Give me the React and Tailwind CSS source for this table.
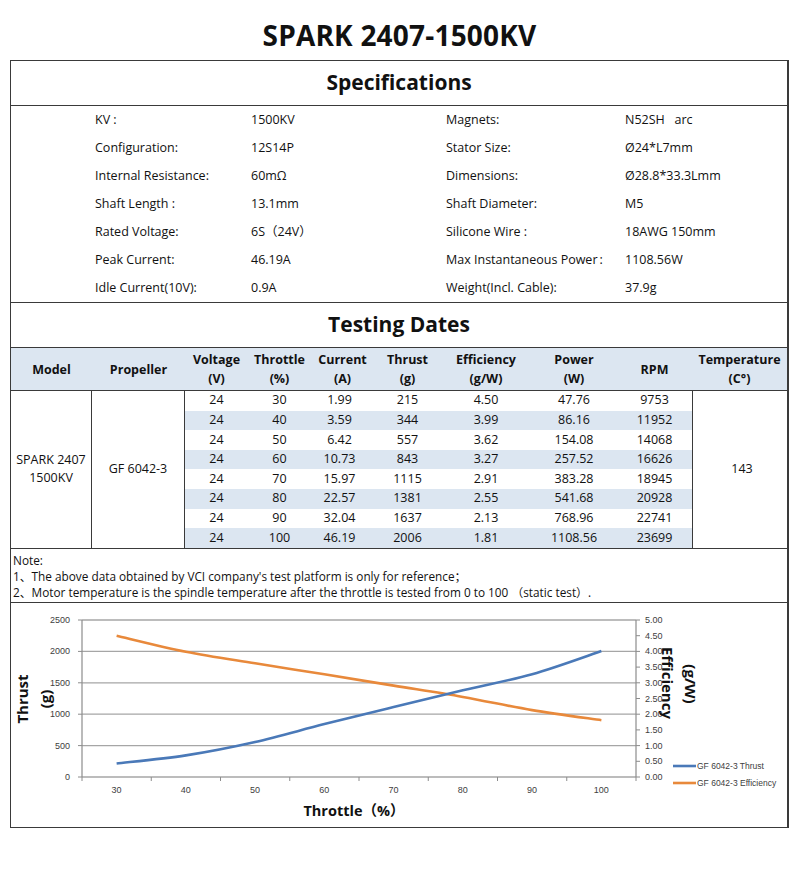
const FONT = { fontFamily: '"Open Sans", "Noto Sans CJK SC", sans-serif' }

const SPECS = [
  ['KV :', '1500KV', 'Magnets:', 'N52SH\u00a0\u00a0\u00a0arc'],
  ['Configuration:', '12S14P', 'Stator Size:', 'Ø24*L7mm'],
  ['Internal Resistance:', '60mΩ', 'Dimensions:', 'Ø28.8*33.3Lmm'],
  ['Shaft Length :', '13.1mm', 'Shaft Diameter:', 'M5'],
  ['Rated Voltage:', '6S（24V）', 'Silicone Wire :', '18AWG 150mm'],
  ['Peak Current:', '46.19A', 'Max Instantaneous Power\u2009:', '1108.56W'],
  ['Idle Current(10V):', '0.9A', 'Weight(Incl. Cable):', '37.9g'],
]

// voltage, throttle, current, thrust, efficiency, power, rpm
const ROWS = [
  ['24', '30', '1.99', '215', '4.50', '47.76', '9753'],
  ['24', '40', '3.59', '344', '3.99', '86.16', '11952'],
  ['24', '50', '6.42', '557', '3.62', '154.08', '14068'],
  ['24', '60', '10.73', '843', '3.27', '257.52', '16626'],
  ['24', '70', '15.97', '1115', '2.91', '383.28', '18945'],
  ['24', '80', '22.57', '1381', '2.55', '541.68', '20928'],
  ['24', '90', '32.04', '1637', '2.13', '768.96', '22741'],
  ['24', '100', '46.19', '2006', '1.81', '1108.56', '23699'],
]

const MID_COLS = 'grid grid-cols-[63px_63px_63px_67px_90px_86px_75px]'

/** smoothed line through points (catmull-rom -> bezier) */
function smoothPath(pts) {
  let d = `M${pts[0][0]},${pts[0][1]}`
  for (let i = 0; i < pts.length - 1; i++) {
    const p0 = pts[i - 1] || pts[i]
    const p1 = pts[i]
    const p2 = pts[i + 1]
    const p3 = pts[i + 2] || p2
    const c1x = p1[0] + (p2[0] - p0[0]) / 6
    const c1y = p1[1] + (p2[1] - p0[1]) / 6
    const c2x = p2[0] - (p3[0] - p1[0]) / 6
    const c2y = p2[1] - (p3[1] - p1[1]) / 6
    d += ` C${c1x},${c1y} ${c2x},${c2y} ${p2[0]},${p2[1]}`
  }
  return d
}

function Chart() {
  const left = 82
  const right = 636
  const top = 619
  const bottom = 776
  const step = (right - left) / 8
  const xs = ROWS.map((_, i) => left + step * (i + 0.5))
  const thrust = ROWS.map((r, i) => [xs[i], bottom - (Number(r[3]) / 2500) * (bottom - top)])
  const eff = ROWS.map((r, i) => [xs[i], bottom - (Number(r[4]) / 5) * (bottom - top)])
  const grid = [0, 500, 1000, 1500, 2000, 2500]
  const rightTicks = [0, 0.5, 1, 1.5, 2, 2.5, 3, 3.5, 4, 4.5, 5]

  return (
    <svg viewBox="11 602 776 224" width="776" height="224" className="block">
      {grid.map((g) => {
        const y = bottom - (g / 2500) * (bottom - top)
        return (
          <g key={g}>
            <line x1={left} x2={right} y1={y} y2={y} stroke="#a6a6a6" strokeWidth="1.3" />
            <line x1={left - 4} x2={left} y1={y} y2={y} stroke="#8c8c8c" />
            <text x={left - 12} y={y + 3} textAnchor="end" fontSize="9" fill="#404040" fontFamily="Liberation Sans, sans-serif">
              {g}
            </text>
          </g>
        )
      })}
      {rightTicks.map((t) => {
        const y = bottom - (t / 5) * (bottom - top)
        return (
          <g key={t}>
            <line x1={right} x2={right + 4} y1={y} y2={y} stroke="#8c8c8c" />
            <text x={right + 9} y={y + 3} fontSize="9" fill="#404040" fontFamily="Liberation Sans, sans-serif">
              {t.toFixed(2)}
            </text>
          </g>
        )
      })}
      <line x1={left} x2={left} y1={top} y2={bottom} stroke="#8c8c8c" strokeWidth="1.2" />
      <line x1={right} x2={right} y1={top} y2={bottom} stroke="#8c8c8c" strokeWidth="1.2" />
      {Array.from({ length: 9 }).map((_, i) => (
        <line key={i} x1={left + step * i} x2={left + step * i} y1={bottom} y2={bottom + 4} stroke="#8c8c8c" />
      ))}
      {ROWS.map((r, i) => (
        <text key={r[1]} x={xs[i]} y={792} textAnchor="middle" fontSize="9" fill="#404040" fontFamily="Liberation Sans, sans-serif">
          {r[1]}
        </text>
      ))}
      <path d={smoothPath(eff)} fill="none" stroke="#e8893b" strokeWidth="2.6" />
      <path d={smoothPath(thrust)} fill="none" stroke="#4a79b8" strokeWidth="2.6" />

      <text transform="translate(28 698) rotate(-90)" textAnchor="middle" fontSize="15" fontWeight="700" fill="#111" style={FONT}>
        Thrust
      </text>
      <text transform="translate(51 698) rotate(-90)" textAnchor="middle" fontSize="15" fontWeight="700" fill="#111" style={FONT}>
        (g)
      </text>
      <text transform="translate(662 682) rotate(90)" textAnchor="middle" fontSize="15" fontWeight="700" fill="#111" style={FONT}>
        Efficiency
      </text>
      <text transform="translate(685 683) rotate(90)" textAnchor="middle" fontSize="15" fontWeight="700" fill="#111" style={FONT}>
        (g/W)
      </text>
      <text x={354} y={815} textAnchor="middle" fontSize="14.5" fontWeight="700" fill="#111" style={FONT}>
        Throttle（%）
      </text>

      <line x1={673} x2={696} y1={765} y2={765} stroke="#4a79b8" strokeWidth="2.6" />
      <text x={697} y={768} fontSize="8.5" fill="#404040" fontFamily="Liberation Sans, sans-serif">
        GF 6042-3 Thrust
      </text>
      <line x1={673} x2={696} y1={782} y2={782} stroke="#e8893b" strokeWidth="2.6" />
      <text x={697} y={785} fontSize="8.5" fill="#404040" fontFamily="Liberation Sans, sans-serif">
        GF 6042-3 Efficiency
      </text>
    </svg>
  )
}

export default function App() {
  return (
    <div className="w-[799px] bg-white text-[#111]" style={FONT}>
      <div className="h-[60px] pt-[10px] flex items-center justify-center">
        <h1 className="text-[28px] font-bold tracking-[0.2px]">SPARK 2407-1500KV</h1>
      </div>

      <div className="ml-[10px] w-[779px] border border-r-2 border-[#3a3a3a]">
        {/* Specifications */}
        <div className="h-[45px] border-b border-[#3a3a3a] flex items-center justify-center">
          <h2 className="text-[21px] font-bold">Specifications</h2>
        </div>
        <div className="h-[197px] border-b border-[#3a3a3a] text-[12.5px]">
          {SPECS.map((row) => (
            <div key={row[0]} className="grid grid-cols-[84px_156px_195px_179px_1fr] h-[28px] items-center">
              <span />
              <span>{row[0]}</span>
              <span>{row[1]}</span>
              <span>{row[2]}</span>
              <span>{row[3]}</span>
            </div>
          ))}
        </div>

        {/* Testing Dates */}
        <div className="h-[45px] border-b border-[#3a3a3a] flex items-center justify-center">
          <h2 className="text-[21px] font-bold">Testing Dates</h2>
        </div>
        <div className="h-[43px] border-b border-[#3a3a3a] bg-[#dce6f1] flex items-center text-[12.5px] font-bold leading-[19px] text-center">
          <div className="w-[81px]">Model</div>
          <div className="w-[93px]">Propeller</div>
          <div className={MID_COLS}>
            <div>Voltage<br />(V)</div>
            <div>Throttle<br />(%)</div>
            <div>Current<br />(A)</div>
            <div>Thrust<br />(g)</div>
            <div>Efficiency<br />(g/W)</div>
            <div>Power<br />(W)</div>
            <div className="self-center">RPM</div>
          </div>
          <div className="flex-1">Temperature<br />(C°)</div>
        </div>
        <div className="flex border-b border-[#3a3a3a] text-[12.5px]">
          <div className="w-[81px] border-r border-[#3a3a3a] flex items-center justify-center text-center leading-[18px]">
            SPARK 2407<br />1500KV
          </div>
          <div className="w-[93px] border-r border-[#3a3a3a] flex items-center justify-center">GF 6042-3</div>
          <div className="flex flex-col">
            {ROWS.map((r, i) => (
              <div key={r[1]} className={`${MID_COLS} h-[19.6px] items-center text-center ${i % 2 ? 'bg-[#dce6f1]' : 'bg-white'}`}>
                {r.map((c, j) => (
                  <span key={j} className={j === 2 ? 'pr-[6px]' : ''}>{c}</span>
                ))}
              </div>
            ))}
          </div>
          <div className="flex-1 border-l border-[#3a3a3a] flex items-center justify-center pl-[4px]">143</div>
        </div>

        {/* Note */}
        <div className="h-[54px] border-b border-[#3a3a3a] pl-[2px] pt-[3px] text-[11.8px] leading-[16px]">
          <div>Note:</div>
          <div>1、The above data obtained by VCI company's test platform is only for reference；</div>
          <div>2、Motor temperature is the spindle temperature after the throttle is tested from 0 to 100 （static test）.</div>
        </div>

        {/* Chart */}
        <div className="h-[224px]">
          <Chart />
        </div>
      </div>
    </div>
  )
}
